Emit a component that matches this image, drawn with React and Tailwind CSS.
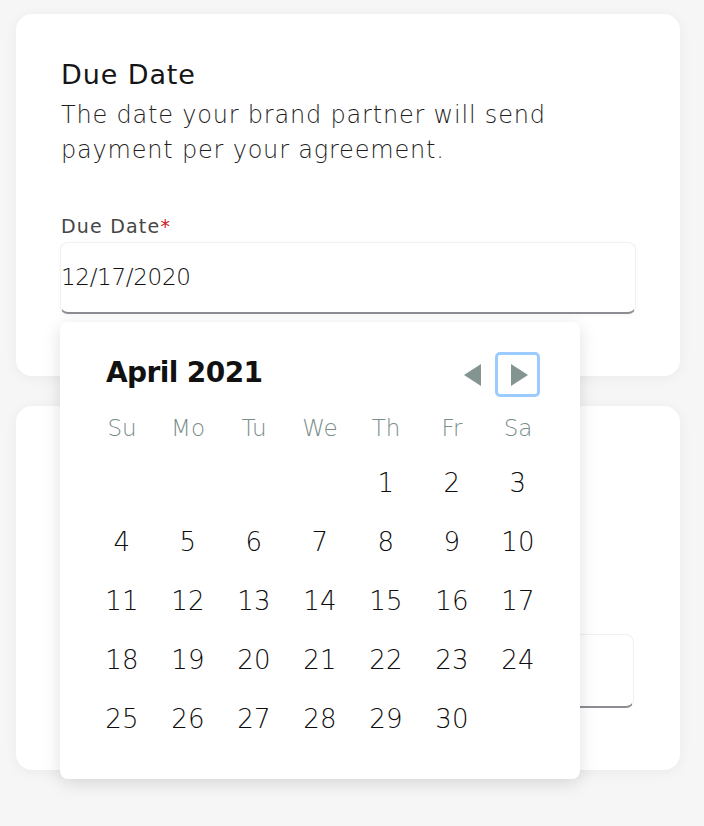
import React from "react";

const font = { fontFamily: '"DejaVu Sans", "Noto Sans", sans-serif' };

const weekdays = ["Su", "Mo", "Tu", "We", "Th", "Fr", "Sa"];
const days = [null, null, null, null, 1, 2, 3, 4, 5, 6, 7, 8, 9, 10, 11, 12, 13, 14, 15, 16, 17, 18, 19, 20, 21, 22, 23, 24, 25, 26, 27, 28, 29, 30];

function Calendar() {
  return (
    <div className="absolute left-0 top-[calc(100%+8px)] z-10 w-[520px] h-[457px] rounded-lg bg-white shadow-[0_4px_18px_rgba(0,0,0,0.13)]">
      <div className="flex items-center justify-between pl-[46px] pr-[40px] pt-[30px] h-[75px]">
        <div className="text-[28px] font-semibold leading-none text-[#111] tracking-[-0.6px] -mt-[4px]">April 2021</div>
        <div className="flex items-center gap-[12px]">
          <svg width="20" height="24" viewBox="0 0 20 24">
            <polygon points="18,1 18,23 1,12" fill="#849591" />
          </svg>
          <div className="w-[45px] h-[45px] rounded-[5px] border-[3px] border-[#9ccbff] flex items-center justify-center">
            <svg width="20" height="24" viewBox="0 0 20 24" className="ml-[2px]">
              <polygon points="2,1 2,23 19,12" fill="#849591" />
            </svg>
          </div>
        </div>
      </div>
      <div className="grid grid-cols-[repeat(7,66px)] px-[29px] mt-[10px]">
        {weekdays.map((d) => (
          <div key={d} className="h-[42px] flex items-center justify-center text-[23px] text-[#7a8d8a] font-extralight">
            {d}
          </div>
        ))}
      </div>
      <div className="grid grid-cols-[repeat(7,66px)] auto-rows-[59px] px-[29px] mt-[5px]">
        {days.map((d, i) => (
          <div key={i} className="flex items-center justify-center text-[26px] text-[#0d0d0d] font-extralight tracking-[0.3px]">
            {d}
          </div>
        ))}
      </div>
    </div>
  );
}

export default function App() {
  return (
    <div style={font} className="min-h-[826px] w-[704px] bg-[#f6f6f6] pt-[14px] px-[16px] overflow-hidden">
      <div className="w-[664px] h-[362px] rounded-[16px] bg-white shadow-[0_2px_14px_rgba(0,0,0,0.05)] pl-[44px] pr-[44px] pt-[44px]">
        <h2 className="pl-[1px] text-[27px] font-medium leading-[34px] text-[#151515] tracking-[0.9px]">Due Date</h2>
        <p className="pl-[1px] mt-[6px] text-[24px] leading-[35px] text-[#1f1f1f] font-extralight tracking-[0.8px] whitespace-nowrap">
          The date your brand partner will send
          <br />
          payment per your agreement.
        </p>
        <div className="pl-[1px] mt-[46px] text-[19px] leading-[24px] font-normal text-[#454545] tracking-[1.2px]">
          Due Date<span className="text-[#d0202a]">*</span>
        </div>
        <div className="relative mt-[4px] w-[576px]">
          <div className="h-[72px] rounded-lg bg-white border border-[#f0f0f0] border-b-[2px] border-b-[#8d8d94] flex items-center text-[23px] text-[#111] font-extralight tracking-[-0.3px] shadow-[0_1px_4px_rgba(0,0,0,0.04)]">
            12/17/2020
          </div>
          <Calendar />
        </div>
      </div>
      <div className="mt-[30px] w-[664px] h-[364px] rounded-[16px] bg-white shadow-[0_2px_14px_rgba(0,0,0,0.05)] pl-[44px] pt-[228px]">
        <div className="w-[574px] h-[74px] rounded-lg bg-white border border-[#f0f0f0] border-b-[2px] border-b-[#8d8d94]" />
      </div>
    </div>
  );
}
